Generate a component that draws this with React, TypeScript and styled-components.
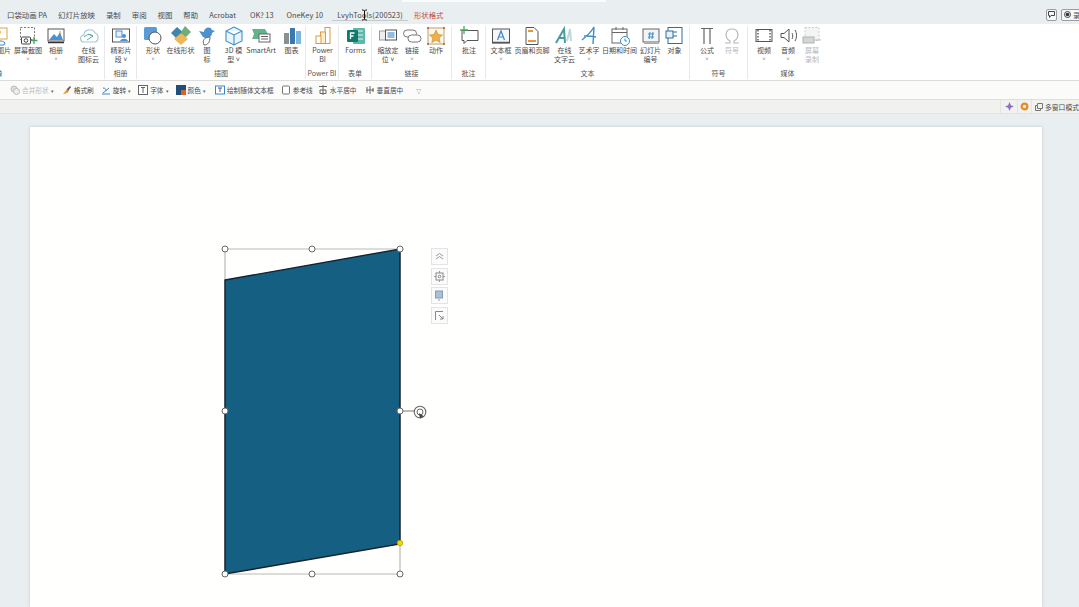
import React from 'react';
import styled, {createGlobalStyle} from 'styled-components';

const GlobalStyle = createGlobalStyle`
    html, body {
        margin: 0;
        padding: 0;
        background: #e9eef1;
    }
    * {
        box-sizing: border-box;
    }
`;

const Page = styled.div`
    width: 1079px;
    height: 607px;
    overflow: hidden;
    display: flex;
    flex-direction: column;
    font-family: "Noto Sans CJK SC", "Liberation Sans", sans-serif;
    color: #4a4a4a;
    background: #e9eef1;
`;

const TabBar = styled.div`
    height: 24px;
    flex-shrink: 0;
    display: flex;
    align-items: center;
    padding-left: 1.5px;
    position: relative;
    background: #e9eef1;
`;

const SearchEdge = styled.div`
    position: absolute;
    left: 402px;
    top: 0;
    width: 204px;
    height: 2px;
    background: #fafbfb;
`;

const TextCursor = styled.svg`
    position: absolute;
    left: 361px;
    top: 9px;
    width: 7px;
    height: 12px;
`;

const Tab = styled.div<{$active?: boolean; $accent?: boolean; $pad?: number}>`
    height: 24px;
    line-height: 29px;
    padding: 0 ${({$pad}) => $pad || 5.5}px 0 5.5px;
    font-size: 7.4px;
    letter-spacing: ${({$active}) => ($active ? '0.12px' : '0')};
    white-space: nowrap;
    color: ${({$accent}) => ($accent ? '#c0503c' : '#4a4a4a')};
    box-shadow: ${({$active}) => ($active ? 'inset 0 -3px 0 #e9eef1, inset 0 -4px 0 #c6c9cb' : 'none')};
`;

const TabRight = styled.div`
    margin-left: auto;
    display: flex;
    align-items: center;
    gap: 4px;
    padding-top: 5px;
    margin-right: -10px;
`;

const TitleButton = styled.div<{$wide?: boolean}>`
    width: ${({$wide}) => ($wide ? '28px' : '11px')};
    height: 12px;
    border: 1px solid #9a9ea0;
    border-radius: 2px;
    background: #f6f7f8;
    display: flex;
    align-items: center;
    justify-content: ${({$wide}) => ($wide ? 'flex-start' : 'center')};
    padding-left: ${({$wide}) => ($wide ? '2px' : '0')};
    font-size: 7px;
    gap: 2px;
    overflow: hidden;
    white-space: nowrap;
`;

const Ribbon = styled.div`
    height: 57px;
    flex-shrink: 0;
    background: #fff;
    border-bottom: 1px solid #dcdcdc;
    display: flex;
    padding-top: 2px;
    overflow: hidden;
`;

const RibbonTrack = styled.div`
    display: flex;
    margin-left: -113px;
`;

const Group = styled.div<{$width: number; $lead?: number; $last?: boolean}>`
    width: ${({$width}) => $width}px;
    flex-shrink: 0;
    height: 53px;
    display: flex;
    flex-direction: column;
    border-right: 1px solid ${({$last}) => ($last ? 'transparent' : '#e6e8e9')};
    padding-left: ${({$lead}) => $lead || 0}px;
`;

const GroupItems = styled.div`
    flex: 1;
    display: flex;
`;

const GroupLabel = styled.div<{$lead?: number}>`
    height: 11px;
    line-height: 10px;
    font-size: 7px;
    text-align: center;
    white-space: nowrap;
    color: #555;
    margin-left: -${({$lead}) => $lead || 0}px;
`;

const ToolButton = styled.div<{$width: number; $off?: boolean}>`
    width: ${({$width}) => $width}px;
    flex-shrink: 0;
    display: flex;
    flex-direction: column;
    align-items: center;
    color: ${({$off}) => ($off ? '#b4b8ba' : '#4a4a4a')};
`;

const ToolIcon = styled.svg`
    width: 20px;
    height: 20px;
    flex-shrink: 0;
`;

const ToolLine = styled.div`
    font-size: 7px;
    line-height: 9px;
    height: 9px;
    white-space: nowrap;
`;

const Caret = styled.div`
    font-size: 5px;
    line-height: 8px;
    height: 8px;
    color: #666;
`;

const QuickBar = styled.div`
    height: 19px;
    flex-shrink: 0;
    background: #fbfbfa;
    border-bottom: 1px solid #dedede;
    display: flex;
    align-items: center;
    padding-left: 10px;
`;

const QuickItem = styled.div<{$gap: number; $off?: boolean}>`
    display: flex;
    align-items: center;
    gap: 2px;
    font-size: 6.7px;
    white-space: nowrap;
    margin-right: ${({$gap}) => $gap}px;
    color: ${({$off}) => ($off ? '#b8b8b8' : '#4a4a4a')};
`;

const QuickIcon = styled.svg`
    width: 10px;
    height: 10px;
    flex-shrink: 0;
`;

const QuickCaret = styled.span`
    font-size: 5px;
    width: 5px;
    color: #666;
`;

const StatusStrip = styled.div`
    height: 14px;
    flex-shrink: 0;
    background: #f1f1ef;
    border-bottom: 1px solid #e2e4e4;
    display: flex;
    justify-content: flex-end;
`;

const StatusCell = styled.div<{$width: number; $end?: boolean}>`
    width: ${({$width}) => $width}px;
    height: 13px;
    border-left: 1px solid #e4e4e2;
    display: flex;
    align-items: center;
    justify-content: ${({$end}) => ($end ? 'flex-end' : 'center')};
    gap: 2px;
    font-size: 6.8px;
    white-space: nowrap;
    overflow: hidden;
`;

const Workspace = styled.div`
    flex: 1;
    min-height: 0;
    padding: 13px 37px 0 30px;
    background: #e9eef1;
`;

const Slide = styled.div`
    position: relative;
    height: 100%;
    background: #fffffd;
    box-shadow: 0 0 3px rgba(120, 130, 135, 0.35);
`;

const ShapeCanvas = styled.svg`
    position: absolute;
    left: 185px;
    top: 110px;
    width: 220px;
    height: 350px;
`;

const FloatBar = styled.div`
    position: absolute;
    left: 401px;
    top: 121px;
    display: flex;
    flex-direction: column;
    gap: 2.5px;
`;

const FloatButton = styled.div`
    width: 17px;
    height: 17px;
    background: #fbfbfb;
    border: 1px solid #e2e4e5;
    display: flex;
    align-items: center;
    justify-content: center;
`;

const FloatIcon = styled.svg`
    width: 11px;
    height: 11px;
`;

const icons: Record<string, React.ReactNode> = {
    picture: (
        <>
            <rect x="1" y="2" width="12" height="11" fill="#fff" stroke="#e0a04a" />
            <circle cx="5" cy="6" r="2" fill="#efb65a" />
            <path d="M0 18c1-4 9-4 11-1l-1 2H1z" fill="#fff" stroke="#3f86c4" />
        </>
    ),
    shot: (
        <>
            <rect x="2.500" y="1.500" width="14" height="12" fill="none" stroke="#777" strokeDasharray="2 1.500" />
            <rect x="3.500" y="11" width="9" height="7" rx="1" fill="#fff" stroke="#444" />
            <circle cx="8" cy="14.500" r="1.800" fill="none" stroke="#444" />
            <path d="M16 11v7M12.500 14.500h7" stroke="#49a55a" strokeWidth="1.300" />
        </>
    ),
    album: (
        <>
            <rect x="2" y="3" width="16" height="12" fill="#fff" stroke="#555" />
            <path d="M3 14l5-6 3 3 3-5 3 8z" fill="#4d92d0" />
            <circle cx="14" cy="6" r="1" fill="#efb65a" />
            <path d="M2 16.500h16" stroke="#333" strokeWidth="1.500" />
        </>
    ),
    cloudIcon: (
        <>
            <path d="M5 16c-4 0-5-6 0-7 0-6 9-7 11-2 4 1 4 8 0 9z" fill="none" stroke="#a8c8cf" strokeWidth="1.200" />
            <path d="M5 11c3-3 7-3 9-1M9 8l5 2-6 4" fill="none" stroke="#5aa8b8" />
        </>
    ),
    clip: (
        <>
            <rect x="1.500" y="3" width="17" height="13" fill="#fff" stroke="#555" />
            <rect x="5" y="5" width="6" height="6" fill="#e8f0f8" stroke="#4d92d0" />
            <circle cx="13" cy="10" r="2" fill="#4d92d0" />
            <path d="M9 15c1-3 7-3 8 0z" fill="#4d92d0" />
        </>
    ),
    shape: (
        <>
            <rect x="1" y="1" width="13" height="13" rx="1.500" fill="#5b9bd5" />
            <circle cx="12" cy="12" r="6" fill="#fff" stroke="#555" />
        </>
    ),
    onlineShape: (
        <>
            <path d="M6 1l7 6-7 6-6-6z" fill="#3f86a8" />
            <path d="M14 0l6 6-6 6-4-6z" fill="#6fae7a" />
            <path d="M10 7l7 6-7 6-7-6z" fill="#efb65a" />
        </>
    ),
    iconSet: (
        <>
            <path d="M2 5l5 1c0-5 7-6 8-2l3 1-3 2c0 5-6 6-9 4z" fill="#4d92d0" />
            <path d="M7 19c-2-4 0-8 6-8 0 5-2 8-6 8z" fill="#fff" stroke="#666" />
        </>
    ),
    cube: (
        <path d="M10 1l8 4v10l-8 4-8-4V5zM2 5l8 4 8-4M10 9v10" fill="#eaf4fb" stroke="#3f8fc8" strokeWidth="1.100" />
    ),
    smartArt: (
        <>
            <path d="M1 3h13l3 5-3 5H1l2-5z" fill="#62b58a" />
            <rect x="8" y="8" width="11" height="8" fill="#fff" stroke="#666" />
            <path d="M10 10.500h7M10 13h7" stroke="#666" />
        </>
    ),
    chart: (
        <>
            <rect x="2" y="7" width="5" height="11" fill="#8a8f92" />
            <rect x="8" y="2" width="5" height="16" fill="#3a78b0" />
            <rect x="14" y="5" width="5" height="13" fill="#7fb6de" />
        </>
    ),
    powerBi: (
        <>
            <rect x="12" y="1.500" width="5" height="16" fill="#fff" stroke="#d99a3e" />
            <rect x="7.500" y="6" width="5" height="11.500" fill="#fbeccd" stroke="#d99a3e" />
            <rect x="3" y="10" width="5" height="7.500" fill="#fff" stroke="#d99a3e" />
        </>
    ),
    forms: (
        <>
            <rect x="7" y="2" width="12" height="16" rx="1" fill="#5cb8a8" />
            <path d="M10 5h7M10 9h7M10 13h7" stroke="#e8f6f2" />
            <rect x="1" y="4" width="11" height="12" rx="1" fill="#0f7b6c" />
            <path d="M4.500 13V7h4M4.500 10h3" stroke="#fff" strokeWidth="1.300" fill="none" />
        </>
    ),
    zoom: (
        <>
            <rect x="1.500" y="5" width="8" height="9" fill="#eee" stroke="#999" />
            <rect x="7.500" y="4" width="11" height="10" fill="#fff" stroke="#555" />
            <rect x="9.500" y="6" width="7" height="6" fill="#8fbce0" />
        </>
    ),
    link: (
        <>
            <rect x="1.500" y="4" width="13" height="7" rx="3.500" fill="none" stroke="#777" />
            <rect x="6" y="9" width="13" height="7" rx="3.500" fill="#fff" stroke="#777" />
        </>
    ),
    action: (
        <>
            <rect x="2" y="2" width="16" height="16" fill="#fdf7ec" stroke="#b9a070" />
            <path d="M10 4l2 4.500 4.500.5-3.300 3 1 4.500-4.200-2.300-4.200 2.300 1-4.500-3.300-3 4.500-.5z" fill="#efb04a" stroke="#c98a2a" strokeWidth=".6" />
            <path d="M1 1h2v2H1zM17 1h2v2h-2zM1 17h2v2H1zM17 17h2v2h-2z" fill="#d0703a" />
        </>
    ),
    comment: (
        <>
            <path d="M3 4.500h16v10H8l-3 3v-3H3z" fill="#fff" stroke="#555" />
            <path d="M5 0v8M1 4h8" stroke="#49a55a" strokeWidth="1.300" />
        </>
    ),
    textBox: (
        <>
            <rect x="1.500" y="3" width="17" height="14" fill="#f3f7fa" stroke="#555" />
            <path d="M6.500 14l3.500-9 3.500 9M8 11h4" fill="none" stroke="#3f86c4" strokeWidth="1.200" />
            <path d="M1 16.500h18" stroke="#555" strokeWidth="1.500" />
        </>
    ),
    header: (
        <>
            <path d="M4 1.500h8l4 4v13H4z" fill="#fff" stroke="#555" />
            <path d="M6 5h5M6 15h8" stroke="#e8963a" strokeWidth="2" />
        </>
    ),
    wordCloud: (
        <>
            <path d="M1 17L9 3l1 14M4 12h6" fill="none" stroke="#4c9aa0" strokeWidth="2" />
            <path d="M12 15l3-12 1 12" fill="none" stroke="#bfd8da" strokeWidth="2" />
        </>
    ),
    wordArt: (
        <path d="M3 14C8 10 12 6 15 1l-1 17M5 10c4 0 8 0 12 1" fill="none" stroke="#3f8fc8" strokeWidth="1.400" />
    ),
    date: (
        <>
            <rect x="2" y="3" width="15" height="14" fill="#fff" stroke="#666" />
            <path d="M2 6.500h15M6 1v3M13 1v3" stroke="#666" />
            <circle cx="15" cy="15" r="4.500" fill="#fff" stroke="#3f8fc8" />
            <path d="M15 12.500V15h2" fill="none" stroke="#3f8fc8" />
        </>
    ),
    slideNo: (
        <>
            <rect x="2" y="3" width="16" height="13" fill="#f2f4f5" stroke="#666" />
            <path d="M3 17.500h15" stroke="#aaa" />
            <path d="M9 6l-1 7M12 6l-1 7M7 8h6M7 11h6" stroke="#3f8fc8" />
        </>
    ),
    object: (
        <>
            <rect x="3" y="1.500" width="14" height="16" fill="#fff" stroke="#2f6f9f" />
            <path d="M3 6h9M3 10h9" stroke="#2f6f9f" />
            <rect x="1" y="5" width="7" height="7" fill="#e6f0f8" stroke="#2f6f9f" />
        </>
    ),
    formula: <path d="M4 2.500h12M7 2.500V18M13 2.500V18" fill="none" stroke="#666" strokeWidth="1.200" />,
    symbol: (
        <path d="M3 17h5v-2c-6-3-5-12 2-12s8 9 2 12v2h5" fill="none" stroke="#b4b8ba" strokeWidth="1.200" />
    ),
    video: (
        <>
            <rect x="2" y="3.500" width="16" height="12" fill="#fff" stroke="#555" />
            <path d="M4 4v11M16 4v11" stroke="#555" strokeDasharray="1.500 1.500" strokeWidth="1.400" />
        </>
    ),
    audio: (
        <>
            <path d="M3 7.500h3l5-4.500v13l-5-4.500H3z" fill="#fff" stroke="#555" />
            <path d="M14 7c1 2 1 4 0 6M17 4c2 3 2 8 0 11" fill="none" stroke="#555" />
        </>
    ),
    record: (
        <>
            <rect x="3" y="1.500" width="14" height="13" fill="#f4f4f4" stroke="#ccc" strokeDasharray="2 1.500" />
            <rect x="1" y="11" width="11" height="6" fill="#d4d6d6" stroke="#b0b2b2" />
            <path d="M13 14h6" stroke="#bbb" />
        </>
    ),
};

interface ToolData {
    icon: string;
    lines: string[];
    width: number;
    caret?: boolean;
    off?: boolean;
}

interface GroupData {
    label: string;
    width: number;
    lead?: number;
    last?: boolean;
    tools: ToolData[];
}

const groups: GroupData[] = [
    {
        label: '图像', width: 218, lead: 105, tools: [
            {icon: 'picture', lines: ['图片'], width: 24},
            {icon: 'shot', lines: ['屏幕截图'], width: 24, caret: true},
            {icon: 'album', lines: ['相册'], width: 32, caret: true},
            {icon: 'cloudIcon', lines: ['在线', '图标云'], width: 33},
        ],
    },
    {label: '相册', width: 32, tools: [{icon: 'clip', lines: ['精彩片', '段 ˅'], width: 32}]},
    {
        label: '插图', width: 169, tools: [
            {icon: 'shape', lines: ['形状'], width: 32, caret: true},
            {icon: 'onlineShape', lines: ['在线形状'], width: 23},
            {icon: 'iconSet', lines: ['图', '标'], width: 30},
            {icon: 'cube', lines: ['3D 模', '型 ˅'], width: 23},
            {icon: 'smartArt', lines: ['SmartArt'], width: 32},
            {icon: 'chart', lines: ['图表'], width: 29},
        ],
    },
    {label: 'Power BI', width: 33, tools: [{icon: 'powerBi', lines: ['Power', 'BI'], width: 33}]},
    {label: '表单', width: 33, tools: [{icon: 'forms', lines: ['Forms'], width: 33}]},
    {
        label: '链接', width: 80, tools: [
            {icon: 'zoom', lines: ['缩放定', '位 ˅'], width: 32},
            {icon: 'link', lines: ['链接'], width: 16, caret: true},
            {icon: 'action', lines: ['动作'], width: 32},
        ],
    },
    {label: '批注', width: 34, tools: [{icon: 'comment', lines: ['批注'], width: 34}]},
    {
        label: '文本', width: 204, tools: [
            {icon: 'textBox', lines: ['文本框'], width: 30, caret: true},
            {icon: 'header', lines: ['页眉和页脚'], width: 32},
            {icon: 'wordCloud', lines: ['在线', '文字云'], width: 33},
            {icon: 'wordArt', lines: ['艺术字'], width: 16, caret: true},
            {icon: 'date', lines: ['日期和时间'], width: 45},
            {icon: 'slideNo', lines: ['幻灯片', '编号'], width: 17},
            {icon: 'object', lines: ['对象'], width: 31},
        ],
    },
    {
        label: '符号', width: 58, tools: [
            {icon: 'formula', lines: ['公式'], width: 34, caret: true},
            {icon: 'symbol', lines: ['符号'], width: 16, off: true},
        ],
    },
    {
        label: '媒体', width: 80, last: true, tools: [
            {icon: 'video', lines: ['视频'], width: 32, caret: true},
            {icon: 'audio', lines: ['音频'], width: 16, caret: true},
            {icon: 'record', lines: ['屏幕', '录制'], width: 32, off: true},
        ],
    },
];

const tabs = [
    {text: '口袋动画 PA'},
    {text: '幻灯片放映'},
    {text: '录制'},
    {text: '审阅'},
    {text: '视图'},
    {text: '帮助'},
    {text: 'Acrobat', pad: 8.5},
    {text: 'OK? 13', pad: 7.5},
    {text: 'OneKey 10', pad: 8.5},
];

const quickIcons: Record<string, React.ReactNode> = {
    merge: (
        <>
            <circle cx="4" cy="4" r="3" fill="#ddd" stroke="#bbb" />
            <circle cx="6.500" cy="6.500" r="3" fill="#eee" stroke="#bbb" />
        </>
    ),
    brush: (
        <>
            <path d="M1 9c2-2 3-4 4-5l2 2C6 8 3 9 1 9z" fill="#e8963a" />
            <path d="M5 4l3-3 1 1-3 4z" fill="#555" />
        </>
    ),
    rotate: <path d="M1 9h8M2 8l6-5M2 3c2 0 3 1 3 3" fill="none" stroke="#3f86c4" />,
    font: (
        <>
            <rect x=".5" y=".5" width="9" height="9" fill="#fff" stroke="#666" />
            <path d="M3 2.500h4M5 2.500V8" stroke="#666" />
        </>
    ),
    color: (
        <>
            <rect width="10" height="10" fill="#1f4e79" />
            <rect x="5" y="5" width="5" height="5" fill="#d9622b" />
        </>
    ),
    textBox: (
        <>
            <rect x=".5" y="1" width="9" height="8" fill="#fff" stroke="#3f86c4" />
            <path d="M3 3h4M5 3v4" stroke="#3f5f8f" />
        </>
    ),
    check: <rect x="1.500" y="1" width="7" height="8" rx="1" fill="#fff" stroke="#777" />,
    hCenter: <path d="M1 1.500h8M5 0v10M2 5h6v3.500H2z" fill="none" stroke="#666" />,
    vCenter: <path d="M5 1v8M1 5h8M2 2v6M8 3v4" fill="none" stroke="#666" />,
};

const quickItems = [
    {icon: 'merge', text: '合并形状', gap: 6, caret: true, off: true},
    {icon: 'brush', text: '格式刷', gap: 7},
    {icon: 'rotate', text: '旋转', gap: 5, caret: true},
    {icon: 'font', text: '字体', gap: 5, caret: true},
    {icon: 'color', text: '颜色', gap: 7, caret: true},
    {icon: 'textBox', text: '绘制随体文本框', gap: 7},
    {icon: 'check', text: '参考线', gap: 5},
    {icon: 'hCenter', text: '水平居中', gap: 8},
    {icon: 'vCenter', text: '垂直居中', gap: 13},
];

const handles = [[10, 12], [97, 12], [185, 12], [10, 174], [185, 174], [10, 337], [97, 337], [185, 337]];

function Tool({tool}: {tool: ToolData}) {
    return (
        <ToolButton $width={tool.width} $off={tool.off}>
            <ToolIcon viewBox="0 0 20 20">{icons[tool.icon]}</ToolIcon>
            {tool.lines.map((line) => <ToolLine key={line}>{line}</ToolLine>)}
            {tool.caret && <Caret>˅</Caret>}
        </ToolButton>
    );
}

export default function App() {
    return (
        <Page>
            <GlobalStyle />
            <TabBar>
                <SearchEdge />
                {tabs.map((tab) => <Tab key={tab.text} $pad={tab.pad}>{tab.text}</Tab>)}
                <Tab $active>LvyhTools(200523)</Tab>
                <Tab $accent>形状格式</Tab>
                <TabRight>
                    <TitleButton>
                        <svg width="7" height="7" viewBox="0 0 7 7">
                            <path d="M.5.5h6v4H3L1.500 6.500v-2h-1z" fill="none" stroke="#444" />
                        </svg>
                    </TitleButton>
                    <TitleButton $wide>
                        <svg width="7" height="7" viewBox="0 0 7 7">
                            <circle cx="3.500" cy="3.500" r="3" fill="none" stroke="#444" />
                            <circle cx="3.500" cy="3.500" r="1.800" fill="#333" />
                        </svg>
                        录制
                    </TitleButton>
                </TabRight>
                <TextCursor viewBox="0 0 7 12">
                    <path d="M1 1h1.500L3.500 2l1-1H6M3.500 2v8M1 11h1.500l1-1 1 1H6" fill="none" stroke="#111" />
                </TextCursor>
            </TabBar>
            <Ribbon>
                <RibbonTrack>
                    {groups.map((group) => (
                        <Group key={group.label + group.width} $width={group.width} $lead={group.lead} $last={group.last}>
                            <GroupItems>
                                {group.tools.map((tool) => <Tool key={tool.icon} tool={tool} />)}
                            </GroupItems>
                            <GroupLabel $lead={group.lead}>{group.label}</GroupLabel>
                        </Group>
                    ))}
                </RibbonTrack>
            </Ribbon>
            <QuickBar>
                {quickItems.map((item) => (
                    <QuickItem key={item.text} $gap={item.gap} $off={item.off}>
                        <QuickIcon viewBox="0 0 10 10">{quickIcons[item.icon]}</QuickIcon>
                        {item.text}
                        {item.caret && <QuickCaret>▾</QuickCaret>}
                    </QuickItem>
                ))}
                <QuickCaret>▽</QuickCaret>
            </QuickBar>
            <StatusStrip>
                <StatusCell $width={17}>
                    <svg width="9" height="9" viewBox="0 0 10 10">
                        <path d="M5 0l1.500 3.500L10 5 6.500 6.500 5 10 3.500 6.500 0 5l3.500-1.500z" fill="#8a6fc0" />
                    </svg>
                </StatusCell>
                <StatusCell $width={14}>
                    <svg width="9" height="9" viewBox="0 0 10 10">
                        <circle cx="5" cy="5" r="3.200" fill="none" stroke="#ea8a1e" strokeWidth="2.400" />
                    </svg>
                </StatusCell>
                <StatusCell $width={48} $end>
                    <svg width="8" height="8" viewBox="0 0 8 8">
                        <path d="M2.500.5h5v5h-5zM2.500 2.500h-2v5h5v-2" fill="none" stroke="#777" />
                    </svg>
                    多窗口模式
                </StatusCell>
            </StatusStrip>
            <Workspace>
                <Slide>
                    <ShapeCanvas viewBox="0 0 220 350">
                        <path d="M10 12h175v325H10z" fill="none" stroke="#b9b9b9" strokeWidth="1.200" />
                        <path d="M10 43L185 12V307L10 337z" fill="#155f82" stroke="#14222b" strokeWidth="1.400" />
                        <path d="M185 174h14" stroke="#777" />
                        {handles.map(([x, y]) => (
                            <circle key={`${x}-${y}`} cx={x} cy={y} r="3" fill="#fff" stroke="#666" />
                        ))}
                        <circle cx="185" cy="306" r="2.800" fill="#f5d400" stroke="#a89000" strokeWidth=".6" />
                        <circle cx="205" cy="175" r="5.800" fill="#fff" stroke="#666" strokeWidth="1.100" />
                        <circle cx="205" cy="175" r="3" fill="none" stroke="#666" />
                        <path d="M204 176l1 6 1.500-2 2.500-.5z" fill="#444" />
                    </ShapeCanvas>
                    <FloatBar>
                        <FloatButton>
                            <FloatIcon viewBox="0 0 11 11">
                                <path d="M2 5l3.500-2.500L9 5M2 8l3.500-2.500L9 8" fill="none" stroke="#999" />
                            </FloatIcon>
                        </FloatButton>
                        <FloatButton>
                            <FloatIcon viewBox="0 0 11 11">
                                <rect x="2" y="2" width="7" height="7" fill="none" stroke="#888" />
                                <circle cx="5.500" cy="5.500" r="1.300" fill="none" stroke="#888" />
                                <path d="M5.500 0v2M5.500 9v2M0 5.500h2M9 5.500h2" stroke="#999" />
                            </FloatIcon>
                        </FloatButton>
                        <FloatButton>
                            <FloatIcon viewBox="0 0 11 11">
                                <rect x="1.500" y="1" width="7" height="7" fill="#a9c2dc" stroke="#8a9aaa" />
                                <path d="M5 9v2" stroke="#999" />
                            </FloatIcon>
                        </FloatButton>
                        <FloatButton>
                            <FloatIcon viewBox="0 0 11 11">
                                <path d="M9 1.500H1.500V10M5 5l4 4M9 6v3H6" fill="none" stroke="#888" />
                            </FloatIcon>
                        </FloatButton>
                    </FloatBar>
                </Slide>
            </Workspace>
        </Page>
    );
}
